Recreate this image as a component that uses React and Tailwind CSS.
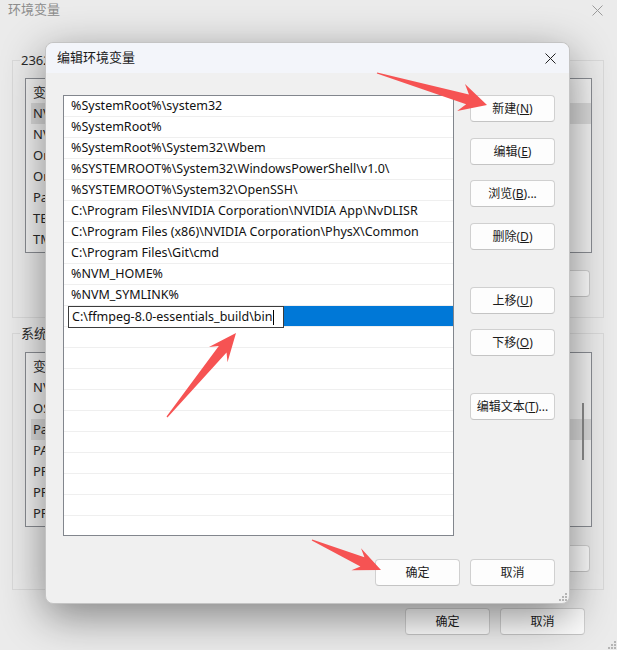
import React from 'react';

const paths = [
  '%SystemRoot%\\system32',
  '%SystemRoot%',
  '%SystemRoot%\\System32\\Wbem',
  '%SYSTEMROOT%\\System32\\WindowsPowerShell\\v1.0\\',
  '%SYSTEMROOT%\\System32\\OpenSSH\\',
  'C:\\Program Files\\NVIDIA Corporation\\NVIDIA App\\NvDLISR',
  'C:\\Program Files (x86)\\NVIDIA Corporation\\PhysX\\Common',
  'C:\\Program Files\\Git\\cmd',
  '%NVM_HOME%',
  '%NVM_SYMLINK%',
];

const userVars = ['NV', 'NV', 'On', 'On', 'Pa', 'TE', 'TM'];
const sysVars = ['NV', 'OS', 'Pa', 'PA', 'PR', 'PR', 'PR'];

// thin arrow polygon, tail -> tip
function arrowPoints(x1, y1, x2, y2, head = 26, hw = 12, sw = 5) {
  const dx = x2 - x1;
  const dy = y2 - y1;
  const L = Math.hypot(dx, dy);
  const ux = dx / L, uy = dy / L;
  const nx = -uy, ny = ux;
  const at = (d, w) => `${x1 + ux * d + nx * w},${y1 + uy * d + ny * w}`;
  return [
    at(0, 0.6),
    at(L - head * 0.75, sw),
    at(L - head, hw),
    at(L, 0),
    at(L - head, -hw),
    at(L - head * 0.75, -sw),
    at(0, -0.6),
  ].join(' ');
}

const CloseX = ({ color = '#222' }) => (
  <svg width="11" height="11" viewBox="0 0 11 11">
    <path d="M0.5 0.5 L10.5 10.5 M10.5 0.5 L0.5 10.5" stroke={color} strokeWidth="1" fill="none" />
  </svg>
);

const Grip = ({ color = '#b5b5b5' }) => (
  <svg width="10" height="10" viewBox="0 0 10 10">
    <rect x="8" y="2" width="2" height="2" fill={color} />
    <rect x="5" y="5" width="2" height="2" fill={color} />
    <rect x="8" y="5" width="2" height="2" fill={color} />
    <rect x="2" y="8" width="2" height="2" fill={color} />
    <rect x="5" y="8" width="2" height="2" fill={color} />
    <rect x="8" y="8" width="2" height="2" fill={color} />
  </svg>
);

const WinButton = ({ children, className = '' }) => (
  <div
    className={`h-[27px] w-[85px] flex items-center justify-center rounded-[4px] border border-[#d0d0d0] border-b-[#c4c4c4] bg-[#fdfdfd] text-[12px] text-[#1b1b1b] ${className}`}
  >
    {children}
  </div>
);

const BgList = ({ rows, selected, scroll }) => (
  <div className="relative w-[567px] h-[175px] border border-[#8a8d93] bg-[#f3f3f3] pt-[3px] overflow-hidden">
    <div className="h-[21px] flex items-center pl-[7px] text-[13px] text-[#2a2a2a]">变量</div>
    {rows.map((r, i) => (
      <div
        key={i}
        className={`h-[21px] flex items-center pl-[2px] ml-[5px] text-[13px] text-[#2a2a2a] ${i === selected ? 'bg-[#dadada]' : ''}`}
      >
        {r}
      </div>
    ))}
    {scroll && <div className="absolute left-[556px] top-[50px] w-[2px] h-[57px] bg-[#8c8c8c]" />}
  </div>
);

export default function App() {
  return (
    <div className="relative w-[617px] h-[650px] overflow-hidden bg-[#ebebeb] font-['Noto_Sans','Noto_Sans_CJK_SC',sans-serif] text-black">
      {/* background window: 环境变量 */}
      <div className="h-[20px] flex items-center justify-between pl-[8px] pr-[14px] text-[13px] text-[#8d8d8d]">
        <span>环境变量</span>
        <CloseX color="#9a9a9a" />
      </div>

      <div className="pl-[12px] pr-[13px]">
        <div className="relative mt-[40px] h-[258px] border border-[#dadada] pl-[12px] pt-[17px]">
          <span className="absolute left-[7px] -top-[10px] px-[1px] bg-[#ebebeb] text-[13px] text-[#2a2a2a]">2362</span>
          <BgList rows={userVars} selected={0} />
          <div className="flex justify-end pr-[13px] mt-[17px]">
            <WinButton className="bg-[#f4f4f4]">删除(L)</WinButton>
          </div>
        </div>

        <div className="relative mt-[15px] h-[257px] border border-[#dadada] pl-[12px] pt-[18px]">
          <span className="absolute left-[7px] -top-[10px] px-[1px] bg-[#ebebeb] text-[13px] text-[#2a2a2a]">系统变量</span>
          <BgList rows={sysVars} selected={2} scroll />
          <div className="flex justify-end pr-[13px] mt-[18px]">
            <WinButton className="bg-[#f4f4f4]">删除(L)</WinButton>
          </div>
        </div>

        <div className="flex justify-end gap-[10px] pr-[19px] mt-[18px]">
          <WinButton className="bg-[#f4f4f4]">确定</WinButton>
          <WinButton className="bg-[#f4f4f4]">取消</WinButton>
        </div>
      </div>
      <div className="absolute right-[1px] bottom-[1px]">
        <Grip />
      </div>

      {/* dialog: 编辑环境变量 */}
      <div className="absolute left-[45px] top-[42px] w-[525px] h-[562px] rounded-[8px] border border-[#c4c4c4] bg-[#f0f0f0] shadow-[0_12px_44px_rgba(0,0,0,0.45)]">
        <div className="h-[30px] flex items-center justify-between pl-[11px] pr-[13px] rounded-t-[8px] bg-[#f3f5fa] text-[13px] text-[#1a1a1a]">
          <span>编辑环境变量</span>
          <CloseX />
        </div>

        <div className="pl-[17px] pr-[14px] pt-[22px]">
          <div className="flex gap-[16px]">
            <div className="w-[391px] h-[441px] border border-[#82868d] bg-white overflow-hidden">
              {paths.map((p, i) => (
                <div key={i} className="h-[21px] flex items-center pl-[7px] pt-[1px] border-b border-[#efefef] text-[12.5px] text-[#111] whitespace-nowrap">
                  {p}
                </div>
              ))}
              <div className="h-[21px] flex items-stretch border-b border-[#efefef]">
                <div className="w-[4px] bg-white" />
                <div className="relative w-[216px] h-[22px] flex items-center pl-[3px] border border-[#3c3c3c] bg-white text-[12.5px] text-[#111] whitespace-nowrap">
                  C:\ffmpeg-8.0-essentials_build\bin
                  <span className="ml-[1px] w-[1px] h-[15px] bg-black" />
                </div>
                <div className="flex-1 bg-[#0078d7]" />
              </div>
              {Array.from({ length: 10 }).map((_, i) => (
                <div key={i} className="h-[21px] border-b border-[#efefef]" />
              ))}
            </div>

            <div className="flex flex-col">
              <WinButton><span>新建(<u>N</u>)</span></WinButton>
              <WinButton className="mt-[16px]"><span>编辑(<u>E</u>)</span></WinButton>
              <WinButton className="mt-[15px]"><span>浏览(<u>B</u>)...</span></WinButton>
              <WinButton className="mt-[16px]"><span>删除(<u>D</u>)</span></WinButton>
              <WinButton className="mt-[37px]"><span>上移(<u>U</u>)</span></WinButton>
              <WinButton className="mt-[15px]"><span>下移(<u>O</u>)</span></WinButton>
              <WinButton className="mt-[37px]"><span>编辑文本(<u>T</u>)...</span></WinButton>
            </div>
          </div>

          <div className="flex justify-end gap-[10px] mt-[23px]">
            <WinButton className="w-[84px] border-[#0067c0] border-b-[#0067c0]">确定</WinButton>
            <WinButton>取消</WinButton>
          </div>
        </div>
        <div className="absolute right-[2px] bottom-[2px]">
          <Grip />
        </div>
      </div>

      {/* annotation arrows */}
      <svg className="absolute inset-0 pointer-events-none" width="617" height="650" viewBox="0 0 617 650">
        <polygon points={arrowPoints(377, 73, 487, 105, 27, 14, 5)} fill="#f65353" />
        <polygon points={arrowPoints(167, 417, 236, 333, 28, 12, 5)} fill="#f65353" />
        <polygon points={arrowPoints(312, 540, 381, 570, 27, 12, 5)} fill="#f65353" />
      </svg>
    </div>
  );
}
